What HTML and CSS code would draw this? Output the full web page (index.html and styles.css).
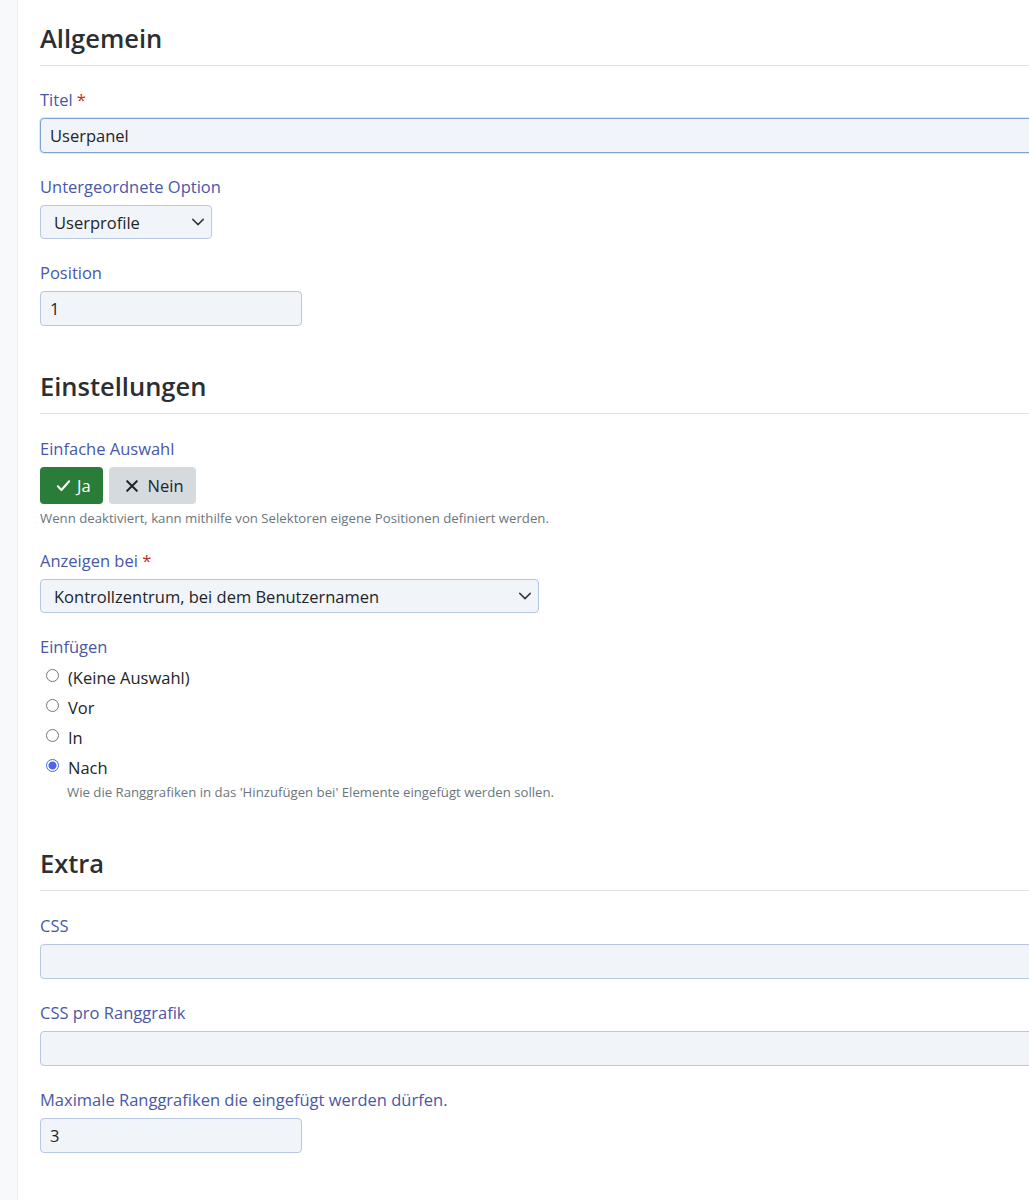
FILE: index.html
```html
<!DOCTYPE html>
<html lang="de">
<head>
    <meta charset="UTF-8">
    <meta name="viewport" content="width=device-width, initial-scale=1.0">
    <title>Ranggrafik bearbeiten</title>
    <link rel="stylesheet" href="styles.css">
</head>
<body>

<div class="layout">
    <div class="side-strip"></div>

    <form class="settings-form">
        <!-- Allgemein -->
        <h2 class="section-title">Allgemein</h2>

        <div class="form-group">
            <label class="form-label" for="title">Titel <span class="required">*</span></label>
            <input class="form-control focused" type="text" id="title" value="Userpanel">
        </div>

        <div class="form-group">
            <label class="form-label" for="parent">Untergeordnete Option</label>
            <div class="select-wrap select-small">
                <select class="form-control" id="parent">
                    <option>Userprofile</option>
                </select>
                <svg class="chevron" viewBox="0 0 16 16" width="14" height="14"><path d="M2 5l6 6 6-6" fill="none" stroke="#343a40" stroke-width="1.7" stroke-linecap="round" stroke-linejoin="round"/></svg>
            </div>
        </div>

        <div class="form-group">
            <label class="form-label" for="position">Position</label>
            <input class="form-control input-short" type="text" id="position" value="1">
        </div>

        <!-- Einstellungen -->
        <h2 class="section-title">Einstellungen</h2>

        <div class="form-group">
            <span class="form-label">Einfache Auswahl</span>
            <div class="toggle-buttons">
                <button type="button" class="btn btn-yes">
                    <svg viewBox="0 0 16 16" width="15" height="15"><path d="M2 8.8l3.8 4L14 3.5" fill="none" stroke="#fff" stroke-width="2.2" stroke-linecap="round" stroke-linejoin="round"/></svg>
                    Ja
                </button>
                <button type="button" class="btn btn-no">
                    <svg viewBox="0 0 16 16" width="14" height="14"><path d="M2.5 2.5l11 11M13.5 2.5l-11 11" fill="none" stroke="#212529" stroke-width="2.3" stroke-linecap="round"/></svg>
                    Nein
                </button>
            </div>
            <p class="help-text">Wenn deaktiviert, kann mithilfe von Selektoren eigene Positionen definiert werden.</p>
        </div>

        <div class="form-group">
            <label class="form-label" for="location">Anzeigen bei <span class="required">*</span></label>
            <div class="select-wrap select-wide">
                <select class="form-control" id="location">
                    <option>Kontrollzentrum, bei dem Benutzernamen</option>
                </select>
                <svg class="chevron" viewBox="0 0 16 16" width="14" height="14"><path d="M2 5l6 6 6-6" fill="none" stroke="#343a40" stroke-width="1.7" stroke-linecap="round" stroke-linejoin="round"/></svg>
            </div>
        </div>

        <div class="form-group">
            <span class="form-label">Einfügen</span>
            <div class="radio-list">
                <label class="radio"><input type="radio" name="insert"> (Keine Auswahl)</label>
                <label class="radio"><input type="radio" name="insert"> Vor</label>
                <label class="radio"><input type="radio" name="insert"> In</label>
                <label class="radio"><input type="radio" name="insert" checked> Nach</label>
            </div>
            <p class="help-text indented">Wie die Ranggrafiken in das 'Hinzufügen bei' Elemente eingefügt werden sollen.</p>
        </div>

        <!-- Extra -->
        <h2 class="section-title extra">Extra</h2>

        <div class="form-group">
            <label class="form-label" for="css">CSS</label>
            <input class="form-control" type="text" id="css">
        </div>

        <div class="form-group">
            <label class="form-label" for="css-item">CSS pro Ranggrafik</label>
            <input class="form-control" type="text" id="css-item">
        </div>

        <div class="form-group">
            <label class="form-label" for="max">Maximale Ranggrafiken die eingefügt werden dürfen.</label>
            <input class="form-control input-short" type="text" id="max" value="3">
        </div>
    </form>
</div>

</body>
</html>
```

FILE: styles.css
```css
body {
    font-family: "Open Sans", "Noto Sans", sans-serif;
    color: #212529;
    background-color: #fff;
    margin: 0;
    padding: 0;
    overflow-x: hidden;
}

.layout {
    display: flex;
    min-height: 1200px;
}

.side-strip {
    width: 17px;
    flex-shrink: 0;
    background-color: #f8f9fa;
    border-right: 1px solid #eceef1;
}

.settings-form {
    width: 1100px;
    flex-shrink: 0;
    padding: 19px 0 40px 22px;
}

.section-title {
    font-size: 25.5px;
    font-weight: 600;
    line-height: 38px;
    color: #2b2f33;
    margin: 0 0 22px 0;
    padding-bottom: 8px;
    border-bottom: 1px solid #dee2e6;
}

.form-group + .section-title {
    margin-top: 41px;
    margin-bottom: 23px;
}

.section-title.extra {
    margin-top: 43px;
}

.form-group {
    margin-bottom: 22px;
}

.form-label {
    display: block;
    font-size: 16.5px;
    line-height: 24px;
    color: #4957a8;
    margin-bottom: 6px;
}

.required {
    color: #c62828;
}

.form-control {
    display: block;
    box-sizing: border-box;
    width: 100%;
    height: 35px;
    padding: 0 9px;
    font-family: inherit;
    font-size: 16.5px;
    color: #212529;
    background-color: #f1f4f9;
    border: 1px solid #b7c8e0;
    border-radius: 4px;
    outline: none;
}

.form-control.focused {
    border-color: #7ea2d6;
    box-shadow: 0 0 0 1px rgba(126, 162, 214, 0.25);
}

.input-short {
    width: 262px;
}

.select-wrap {
    position: relative;
}

.select-wrap select {
    height: 34px;
    appearance: none;
    -webkit-appearance: none;
    padding-left: 13px;
    padding-right: 36px;
}

.select-small {
    width: 172px;
}

.select-wide {
    width: 499px;
}

.chevron {
    position: absolute;
    right: 7px;
    top: 10px;
    pointer-events: none;
}

.toggle-buttons {
    display: flex;
    gap: 6px;
}

.btn {
    display: flex;
    align-items: center;
    gap: 6px;
    height: 37px;
    padding: 0 12px 0 16px;
    font-family: inherit;
    font-size: 16.5px;
    border: none;
    border-radius: 4px;
    cursor: pointer;
}

.btn-yes {
    background-color: #2a7d38;
    color: #fff;
}

.btn-no {
    background-color: #d5dade;
    color: #212529;
    gap: 9px;
}

.help-text {
    font-size: 13.2px;
    line-height: 18px;
    color: #6c757d;
    margin: 5px 0 0 0;
}

.help-text.indented {
    margin-left: 27px;
    margin-top: 1px;
}

.radio-list {
    display: flex;
    flex-direction: column;
    margin-top: -3px;
}

.radio {
    display: flex;
    align-items: center;
    gap: 8px;
    height: 30px;
    font-size: 16.5px;
    color: #212529;
    padding-left: 5px;
}

.radio input {
    appearance: none;
    -webkit-appearance: none;
    width: 13px;
    height: 13px;
    margin: 0 1px 0 1px;
    border: 1px solid #6f7680;
    border-radius: 50%;
    background: #fff;
    position: relative;
    top: -2px;
}

.radio input:checked {
    border-color: #4a66e8;
    background: radial-gradient(circle, #4a66e8 0 3.5px, #fff 4.5px);
}
```
